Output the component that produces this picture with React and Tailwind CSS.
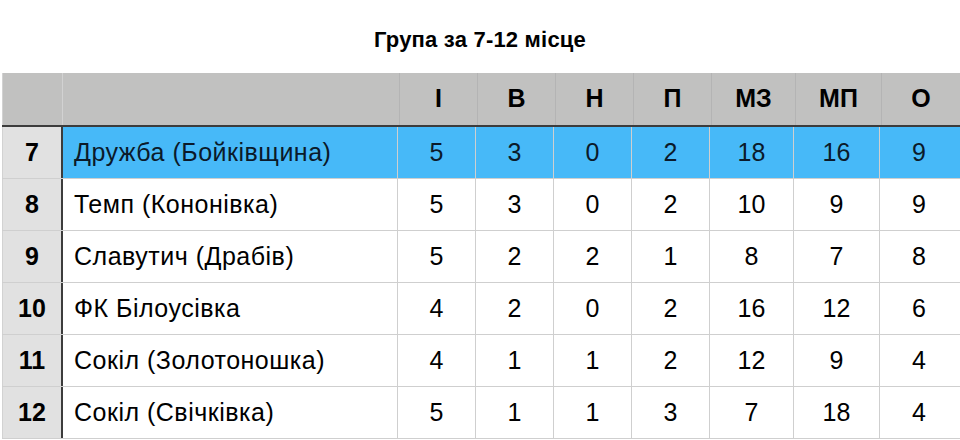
const rows = [
  { n: 7, team: 'Дружба (Бойківщина)', v: [5, 3, 0, 2, 18, 16, 9], active: true },
  { n: 8, team: 'Темп (Кононівка)', v: [5, 3, 0, 2, 10, 9, 9] },
  { n: 9, team: 'Славутич (Драбів)', v: [5, 2, 2, 1, 8, 7, 8] },
  { n: 10, team: 'ФК Білоусівка', v: [4, 2, 0, 2, 16, 12, 6] },
  { n: 11, team: 'Сокіл (Золотоношка)', v: [4, 1, 1, 2, 12, 9, 4] },
  { n: 12, team: 'Сокіл (Свічківка)', v: [5, 1, 1, 3, 7, 18, 4] },
];

const heads = ['І', 'В', 'Н', 'П', 'МЗ', 'МП', 'О'];
const widths = ['w-[78px]', 'w-[78px]', 'w-[78px]', 'w-[78px]', 'w-[84px]', 'w-[86px]', 'w-[78px]'];

export default function App() {
  return (
    <div className="w-[960px] h-[440px] overflow-hidden bg-white text-black font-['Liberation_Sans',Arial,sans-serif]">
      <h1 className="h-[73px] pt-[28px] text-center text-[22px] leading-[24px] font-bold tracking-[0.2px]">Група за 7-12 місце</h1>
      <div className="ml-[2px]">
        {/* header */}
        <div className="flex h-[54px] bg-[#c1c1c0] border-b-2 border-[#3c3c3c] text-[25px] font-bold">
          <div className="w-[61px] border-l border-r border-[#d2d2d2]" />
          <div className="w-[337px] border-r border-[#b4b4b4]" />
          {heads.map((h, i) => (
            <div key={h} className={`${widths[i]} flex items-center justify-center border-r border-[#b4b4b4] last:border-r-0`}>
              {h}
            </div>
          ))}
        </div>
        {/* body */}
        {rows.map((r) => (
          <div key={r.n} className="flex h-[52px] border-b border-[#cfcfcf] text-[25px]">
            <div className="w-[61px] flex items-center justify-center bg-[#e1e1e1] border-l border-[#d2d2d2] border-r-2 border-r-[#3c3c3c] font-bold">
              {r.n}
            </div>
            <div className={`flex flex-1 ${r.active ? 'bg-[#47b9f8] text-[#0b1a2a]' : 'bg-white'}`}>
              <div className="w-[335px] flex items-center pl-[11px] tracking-[0.5px] border-r border-[#cfcfcf]">{r.team}</div>
              {r.v.map((x, i) => (
                <div key={i} className={`${widths[i]} flex items-center justify-center border-r border-[#cfcfcf] last:border-r-0`}>
                  {x}
                </div>
              ))}
            </div>
          </div>
        ))}
      </div>
    </div>
  );
}
